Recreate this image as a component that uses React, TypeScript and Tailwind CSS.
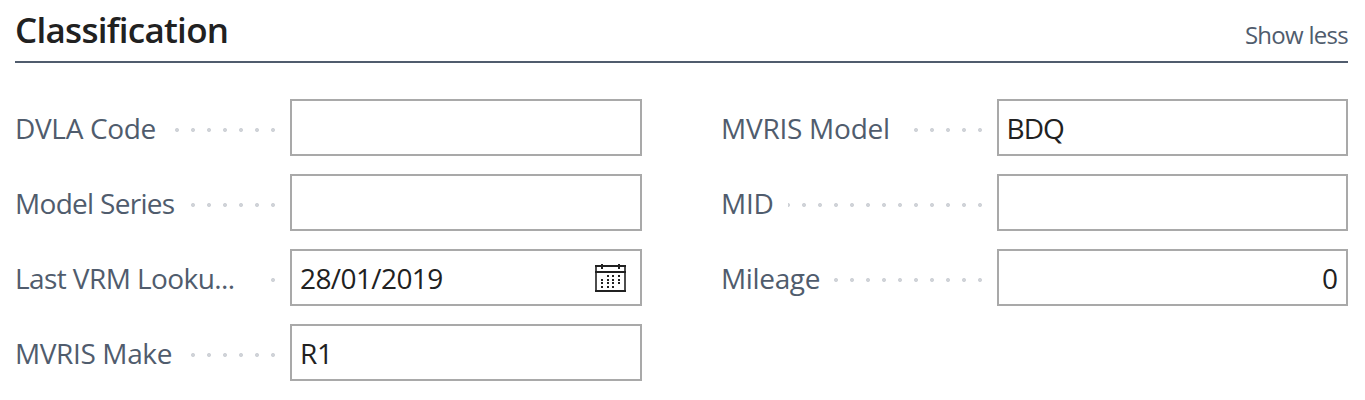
import React from "react";

type Field = {
  label: string;
  labelClass: string;
  dotsClass: string;
  value?: string;
  valueClass?: string;
  calendar?: boolean;
};

const leftFields: Field[] = [
  { label: "DVLA Code", labelClass: "tracking-[-0.33px]", dotsClass: "w-[112px]" },
  { label: "Model Series", labelClass: "tracking-[-0.7px]", dotsClass: "w-[96px]" },
  { label: "Last VRM Looku...", labelClass: "tracking-[-0.58px]", dotsClass: "w-[16px]", value: "28/01/2019", valueClass: "tracking-[-0.6px]", calendar: true },
  { label: "MVRIS Make", labelClass: "tracking-[-0.38px]", dotsClass: "w-[96px]", value: "R1", valueClass: "tracking-[-0.3px]" },
];

const rightFields: Field[] = [
  { label: "MVRIS Model", labelClass: "-ml-px tracking-[-0.25px]", dotsClass: "w-[80px]", value: "BDQ", valueClass: "-ml-[0.5px] tracking-[-0.9px]" },
  { label: "MID", labelClass: "-ml-px tracking-[-0.2px]", dotsClass: "w-[200px]" },
  { label: "Mileage", labelClass: "-ml-px tracking-[-0.35px]", dotsClass: "w-[160px]", value: "0", valueClass: "ml-auto" },
];

const calendarDots = [
  [12, 11], [17, 11], [23, 11],
  [6, 15], [12, 15], [17, 15], [23, 15],
  [6, 18], [12, 18], [17, 18], [23, 18],
  [6, 22], [12, 22], [17, 22],
];

function CalendarIcon() {
  return (
    <svg className="mt-px mr-[14px] ml-auto shrink-0" width="31" height="29" viewBox="0 0 31 29" fill="none">
      <path d="M0 2H31M0 8H31M0 27H31" stroke="#212121" strokeWidth="2" />
      <path d="M1 2V27M30 2V27" stroke="#212121" strokeWidth="1.6" />
      <path d="M7 0V5M24 0V5" stroke="#212121" strokeWidth="2" />
      {calendarDots.map(([x, y]) => (
        <rect key={`${x}-${y}`} x={x} y={y} width="2" height="2" fill="#212121" />
      ))}
    </svg>
  );
}

function FieldRow({ field, boxClass }: { field: Field; boxClass: string }) {
  return (
    <div className="flex h-[57px] items-center">
      <span className="flex-1 whitespace-nowrap text-[28px] leading-[38px] text-[#505c6d]">
        <span className={field.labelClass}>{field.label}</span>
      </span>
      <span
        className={`mt-[5px] mr-[9px] h-4 shrink-0 bg-[radial-gradient(circle,#d0d3d8_1.7px,transparent_2.3px)] bg-[length:16px_16px] bg-right ${field.dotsClass}`}
      />
      <div className={`flex h-[57px] shrink-0 items-center border-2 border-[#a9a9a9] pl-2 text-[28px] leading-[38px] text-[#212121] ${boxClass}`}>
        {field.value && <span className={field.valueClass}>{field.value}</span>}
        {field.calendar && <CalendarIcon />}
      </div>
    </div>
  );
}

export default function App() {
  return (
    <main className="h-[400px] w-[1365px] overflow-hidden bg-white pr-[17px] pl-[15px] font-['Open_Sans','Noto_Sans',sans-serif]">
      <header className="flex h-[63px] justify-between border-b-2 border-[#505c6d]">
        <h2 className="pt-[6px] text-[35px] leading-[48px] font-semibold tracking-[-0.72px] text-[#212121]">Classification</h2>
        <button className="pt-[9px] text-[24px] leading-[34px] tracking-[-0.72px] text-[#505c6d]">Show less</button>
      </header>
      <div className="flex justify-between pt-9">
        <div className="flex w-[627px] flex-col gap-[18px]">
          {leftFields.map((f) => (
            <FieldRow key={f.label} field={f} boxClass="w-[352px]" />
          ))}
        </div>
        <div className="flex w-[626px] flex-col gap-[18px]">
          {rightFields.map((f) => (
            <FieldRow key={f.label} field={f} boxClass="w-[351px] pr-2" />
          ))}
        </div>
      </div>
    </main>
  );
}
